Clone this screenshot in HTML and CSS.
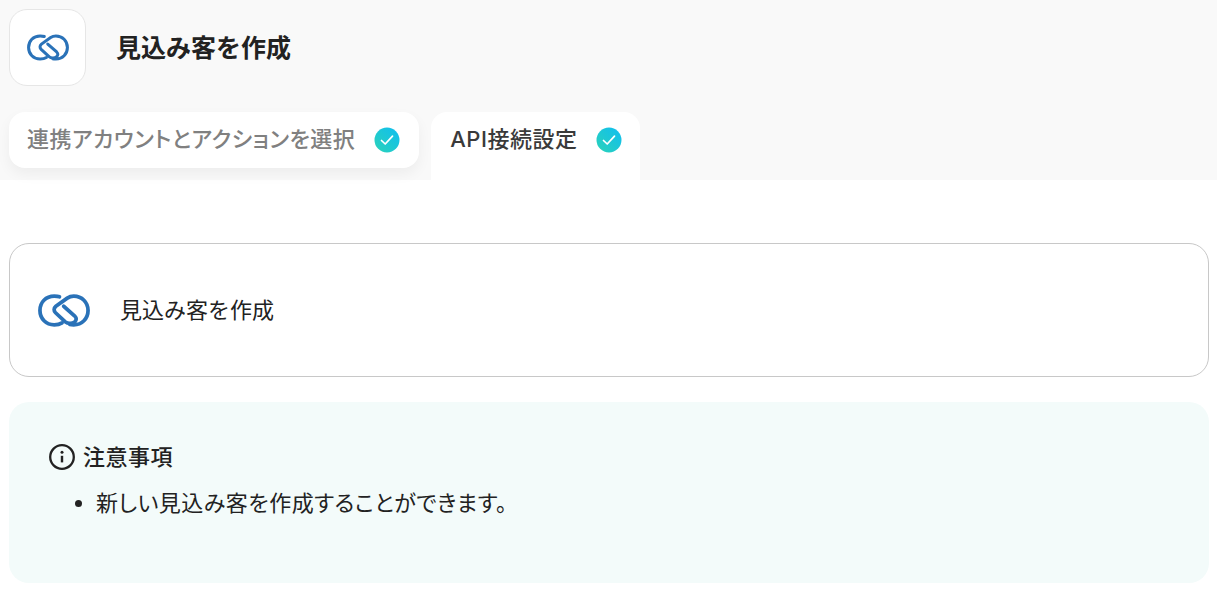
FILE: index.html

```html
<!DOCTYPE html>
<html lang="ja">
<head>
  <meta charset="UTF-8">
  <meta name="viewport" content="width=device-width, initial-scale=1.0">
  <title>見込み客を作成</title>
  <link rel="stylesheet" href="styles.css">
</head>
<body>
  <svg class="defs" width="0" height="0" aria-hidden="true">
    <symbol id="zoho-link" viewBox="20 25 160 100">
      <g fill="none" stroke="#2a72b8" stroke-width="11.5" stroke-linecap="round">
        <path d="M86 33C81 31 76 31 70 31C44 31 26 50 26 75C26 100 45 119 70 119C78 119 86 118 94 113"/>
        <path d="M118 118C122 119 126 119 130 119C155 119 174 100 174 75C174 50 155 31 130 31C122 31 116 33 110 37L75 62C68 68 68 76 74 82L104 110C112 117 126 116 133 110C139 104 139 98 133 92L99 62"/>
      </g>
    </symbol>
  </svg>

  <header class="top">
    <div class="title-row">
      <div class="app-icon">
        <svg class="logo-sm"><use href="#zoho-link"/></svg>
      </div>
      <h1>見込み客を作成</h1>
    </div>
    <div class="tabs">
      <div class="tab tab-done">
        <span>連携アカウントとアクションを選択</span>
        <svg class="check" viewBox="0 0 26 26">
          <defs>
            <linearGradient id="check-grad" x1="0" y1="1" x2="1" y2="0">
              <stop offset="0" stop-color="#2bd3b8"/>
              <stop offset="1" stop-color="#0fbdf2"/>
            </linearGradient>
          </defs>
          <circle cx="13" cy="13" r="12.5" fill="url(#check-grad)"/>
          <path d="M7.5 13.5l3.7 3.5 7.3-7.8" fill="none" stroke="#fff" stroke-width="1.7" stroke-linecap="round" stroke-linejoin="round"/>
        </svg>
      </div>
      <div class="tab tab-active">
        <span>API接続設定</span>
        <svg class="check" viewBox="0 0 26 26">
          <circle cx="13" cy="13" r="12.5" fill="url(#check-grad)"/>
          <path d="M7.5 13.5l3.7 3.5 7.3-7.8" fill="none" stroke="#fff" stroke-width="1.7" stroke-linecap="round" stroke-linejoin="round"/>
        </svg>
      </div>
    </div>
  </header>

  <main class="content">
    <div class="action-card">
      <svg class="logo-lg"><use href="#zoho-link"/></svg>
      <span>見込み客を作成</span>
    </div>

    <div class="notice">
      <div class="notice-head">
        <svg class="info" viewBox="0 0 26 26">
          <circle cx="13" cy="13" r="11.8" fill="none" stroke="#222" stroke-width="2.3"/>
          <circle cx="13" cy="8.2" r="1.5" fill="#222"/>
          <path d="M13 11.8v6.6" stroke="#222" stroke-width="2.4" fill="none"/>
        </svg>
        <span>注意事項</span>
      </div>
      <ul>
        <li>新しい見込み客を作成することができます。</li>
      </ul>
    </div>
  </main>
</body>
</html>
```

FILE: styles.css

```css
* {
  box-sizing: border-box;
}
body {
  margin: 0;
  background: #fff;
  color: #222;
  font-family: Inter, "Noto Sans CJK JP", sans-serif;
  overflow: hidden;
}
.defs {
  display: block;
  height: 0;
}
.top {
  height: 180px;
  background: #f9f9f9;
  padding: 9px 9px 0;
}
.title-row {
  display: flex;
  align-items: center;
  gap: 30px;
}
.app-icon {
  width: 77px;
  height: 77px;
  display: flex;
  align-items: center;
  justify-content: center;
  background: #fff;
  border: 1px solid #e6e6e6;
  border-radius: 18px;
}
.logo-sm {
  width: 42px;
  height: 27px;
}
h1 {
  margin: 0 0 3px;
  font-size: 25px;
  font-weight: 700;
  color: #222;
}
.tabs {
  display: flex;
  align-items: flex-start;
  gap: 12px;
  margin-top: 26px;
}
.tab {
  display: flex;
  align-items: center;
  gap: 19px;
  height: 56px;
  padding: 0 19px 0 18px;
  background: #fff;
  font-size: 22px;
  font-weight: 500;
  letter-spacing: 0.5px;
  font-feature-settings: "palt";
  border-radius: 16px;
}
.tab span {
  margin-bottom: 6px;
}
.tab-done {
  color: #808080;
  box-shadow: 0 6px 14px rgba(0, 0, 0, 0.05);
}
.tab-active {
  height: 68px;
  padding: 0 18px 12px 19px;
  color: #3a3a3a;
  border-radius: 16px 16px 0 0;
}
.check {
  width: 26px;
  height: 26px;
  flex: none;
}
.content {
  padding: 63px 8px 0 9px;
}
.action-card {
  display: flex;
  align-items: center;
  gap: 30px;
  height: 134px;
  padding: 0 28px;
  border: 1px solid #c8c8c8;
  border-radius: 20px;
  font-size: 22px;
  color: #222;
}
.action-card span {
  margin-bottom: 5px;
}
.logo-lg {
  width: 52px;
  height: 33px;
}
.notice {
  height: 181px;
  margin-top: 25px;
  padding: 40px;
  background: #f3fbfa;
  border-radius: 20px;
  font-size: 22px;
  letter-spacing: 0.5px;
  font-feature-settings: "palt";
}
.notice-head {
  display: flex;
  align-items: center;
  gap: 8px;
  height: 30px;
  font-weight: 500;
}
.notice-head span {
  margin-bottom: 5px;
}
.info {
  width: 26px;
  height: 26px;
}
.notice ul {
  margin: 15px 0 0;
  padding-left: 47px;
}
.notice li {
  line-height: 32px;
}
```
